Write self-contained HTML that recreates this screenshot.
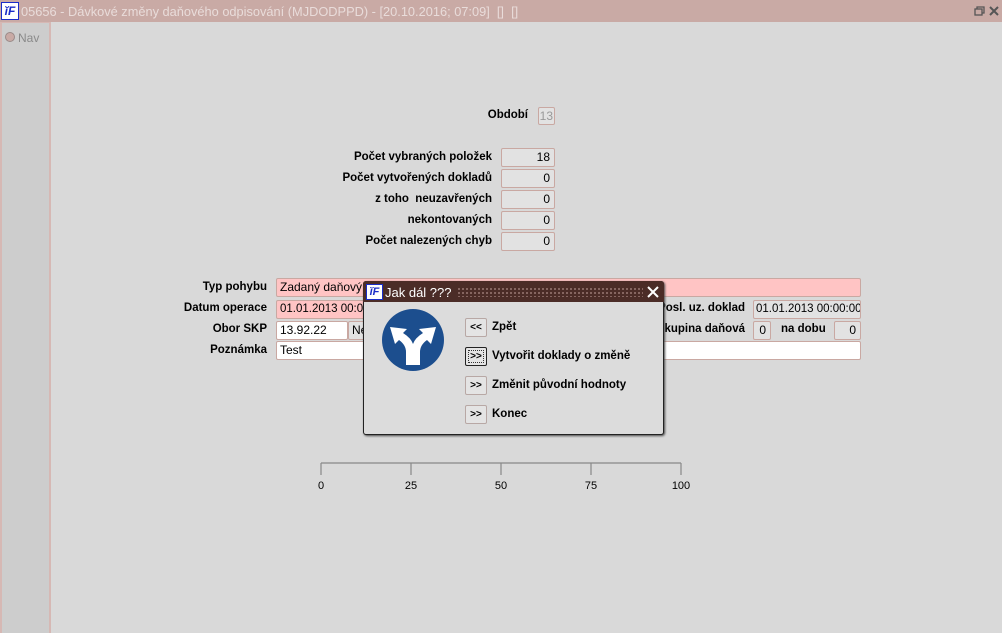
<!DOCTYPE html>
<html><head><meta charset="utf-8"><style>
*{box-sizing:border-box;margin:0;padding:0}
body{width:1002px;height:633px;background:#d9d9d9;font-family:"Liberation Sans",Arial,sans-serif;font-size:12px;position:relative;overflow:hidden;color:#000}
.a{position:absolute}
.lbl{position:absolute;font-weight:bold;text-align:right;white-space:nowrap;font-size:11.5px}
.box{position:absolute;border:1px solid #c9a8a2;background:#e2e2e2;border-radius:2px;text-align:right;padding-right:4px;line-height:17px}
.inp{position:absolute;border:1px solid #c9a8a2;border-radius:2px;padding-left:3px;line-height:17px;white-space:nowrap;overflow:hidden}
.btn{position:absolute;left:465px;width:22px;height:19px;border:1px solid #b8a8a5;background:#e4e4e4;font-size:10px;font-weight:bold;text-align:center;line-height:17px;border-radius:2px}
.bl{position:absolute;left:492px;font-weight:bold;font-size:11.5px}
</style></head><body>
<div class="a" style="left:0;top:0;width:1002px;height:22px;background:#c9aaa5"></div>
<div class="a" style="left:1px;top:2px;width:18px;height:18px;background:#fff;border:1px solid #1a2cc8;color:#1a2cc8;font-weight:bold;font-style:italic;font-size:12px;line-height:16px;text-align:center">ĭF</div>
<div class="a" style="left:21px;top:4px;color:#e9dcda;font-size:12.8px;white-space:nowrap">05656 - Dávkové změny daňového odpisování (MJDODPPD) - [20.10.2016; 07:09]&nbsp; []&nbsp; []</div>
<svg class="a" style="left:974px;top:5px" width="26" height="13"><rect x="1" y="4" width="7" height="6" fill="none" stroke="#555" stroke-width="1.3"/><path d="M3 4V2h7v6H8" fill="none" stroke="#555" stroke-width="1.3"/><path d="M16 2l8 8M24 2l-8 8" stroke="#555" stroke-width="2"/></svg>
<div class="a" style="left:0;top:22px;width:51px;height:611px;background:#cdcdcd;border-left:2px solid #d6b8b4;border-right:2px solid #d6b8b4;border-top:1px solid #d6b8b4"></div>
<div class="a" style="left:5px;top:32px;width:10px;height:10px;border-radius:50%;border:1px solid #9a8a88;background:#c9aaa5"></div>
<div class="a" style="left:18px;top:31px;color:#8a8a8a">Nav</div>

<div class="lbl" style="left:470px;top:109px;width:58px">Období</div>
<div class="box" style="left:538px;top:107px;width:17px;height:18px;color:#999;padding-right:1px">13</div>

<div class="lbl" style="left:300px;top:151px;width:192px">Počet vybraných položek</div>
<div class="lbl" style="left:300px;top:172px;width:192px">Počet vytvořených dokladů</div>
<div class="lbl" style="left:300px;top:193px;width:192px">z toho&nbsp; neuzavřených</div>
<div class="lbl" style="left:300px;top:214px;width:192px">nekontovaných</div>
<div class="lbl" style="left:300px;top:235px;width:192px">Počet nalezených chyb</div>
<div class="box" style="left:501px;top:148px;width:54px;height:19px">18</div>
<div class="box" style="left:501px;top:169px;width:54px;height:19px">0</div>
<div class="box" style="left:501px;top:190px;width:54px;height:19px">0</div>
<div class="box" style="left:501px;top:211px;width:54px;height:19px">0</div>
<div class="box" style="left:501px;top:232px;width:54px;height:19px">0</div>

<div class="lbl" style="left:150px;top:281px;width:117px">Typ pohybu</div>
<div class="lbl" style="left:150px;top:302px;width:117px">Datum operace</div>
<div class="lbl" style="left:150px;top:323px;width:117px">Obor SKP</div>
<div class="lbl" style="left:150px;top:344px;width:117px">Poznámka</div>
<div class="inp" style="left:276px;top:278px;width:585px;height:19px;background:#ffc4c4">Zadaný daňový o</div>
<div class="inp" style="left:276px;top:300px;width:110px;height:19px;background:#ffc4c4;font-size:11.5px">01.01.2013 00:00:00</div>
<div class="inp" style="left:276px;top:321px;width:72px;height:19px;background:#fff">13.92.22</div>
<div class="inp" style="left:348px;top:321px;width:30px;height:19px;background:#e2e2e2">Ne</div>
<div class="inp" style="left:276px;top:341px;width:585px;height:19px;background:#fff">Test</div>
<div class="lbl" style="left:600px;top:302px;width:145px">Posl. uz. doklad</div>
<div class="inp" style="left:753px;top:300px;width:108px;height:19px;background:#e2e2e2;font-size:11.5px;padding-left:2px">01.01.2013 00:00:00</div>
<div class="lbl" style="left:600px;top:323px;width:145px">skupina daňová</div>
<div class="box" style="left:753px;top:321px;width:18px;height:19px">0</div>
<div class="lbl" style="left:781px;top:323px">na dobu</div>
<div class="box" style="left:834px;top:321px;width:27px;height:19px">0</div>

<!-- dialog -->
<div class="a" style="left:363px;top:281px;width:301px;height:154px;background:#dcdcdc;border:1px solid #222;border-radius:3px;box-shadow:1px 1px 2px #444"></div>
<div class="a" style="left:363px;top:281px;width:301px;height:21px;background:#4b2c27;border-radius:3px 3px 0 0"></div>
<div class="a" style="left:366px;top:284px;width:17px;height:16px;background:#fff;border:1px solid #1a2cc8;color:#1a2cc8;font-weight:bold;font-style:italic;font-size:11px;line-height:14px;text-align:center">ĭF</div>
<div class="a" style="left:385px;top:285px;color:#fff;font-size:13px">Jak dál ???</div>
<div class="a" style="left:457px;top:287px;width:186px;height:10px;background-image:radial-gradient(#8a6a65 1px,transparent 1.2px);background-size:4px 4px"></div>
<svg class="a" style="left:647px;top:286px" width="12" height="12"><path d="M1 1l10 10M11 1L1 11" stroke="#fff" stroke-width="2"/></svg>
<svg class="a" style="left:380px;top:307px" width="66" height="66"><circle cx="33" cy="33" r="31" fill="#1c4e8e"/>
<path d="M26 58V45Q26 38 19 33L15 37L10 20L27 22L23 26Q31 31 33 37Q35 31 43 26L39 22L56 20L51 37L47 33Q40 38 40 45V58Z" fill="#fff"/></svg>
<div class="btn" style="top:318px">&lt;&lt;</div>
<div class="btn" style="top:347px;border:1px solid #222;outline:1px dotted #333;outline-offset:-4px">&gt;&gt;</div>
<div class="btn" style="top:376px">&gt;&gt;</div>
<div class="btn" style="top:405px">&gt;&gt;</div>
<div class="bl" style="top:321px">Zpět</div>
<div class="bl" style="top:350px">Vytvořit doklady o změně</div>
<div class="bl" style="top:379px">Změnit původní hodnoty</div>
<div class="bl" style="top:408px">Konec</div>

<svg class="a" style="left:300px;top:455px" width="400" height="40"><path d="M21 8H381M21 8v12M111 8v12M201 8v12M291 8v12M381 8v12" stroke="#888" stroke-width="1.2" fill="none"/>
<g font-family="Liberation Sans,Arial" font-size="11" text-anchor="middle"><text x="21" y="34">0</text><text x="111" y="34">25</text><text x="201" y="34">50</text><text x="291" y="34">75</text><text x="381" y="34">100</text></g></svg>
</body></html>
